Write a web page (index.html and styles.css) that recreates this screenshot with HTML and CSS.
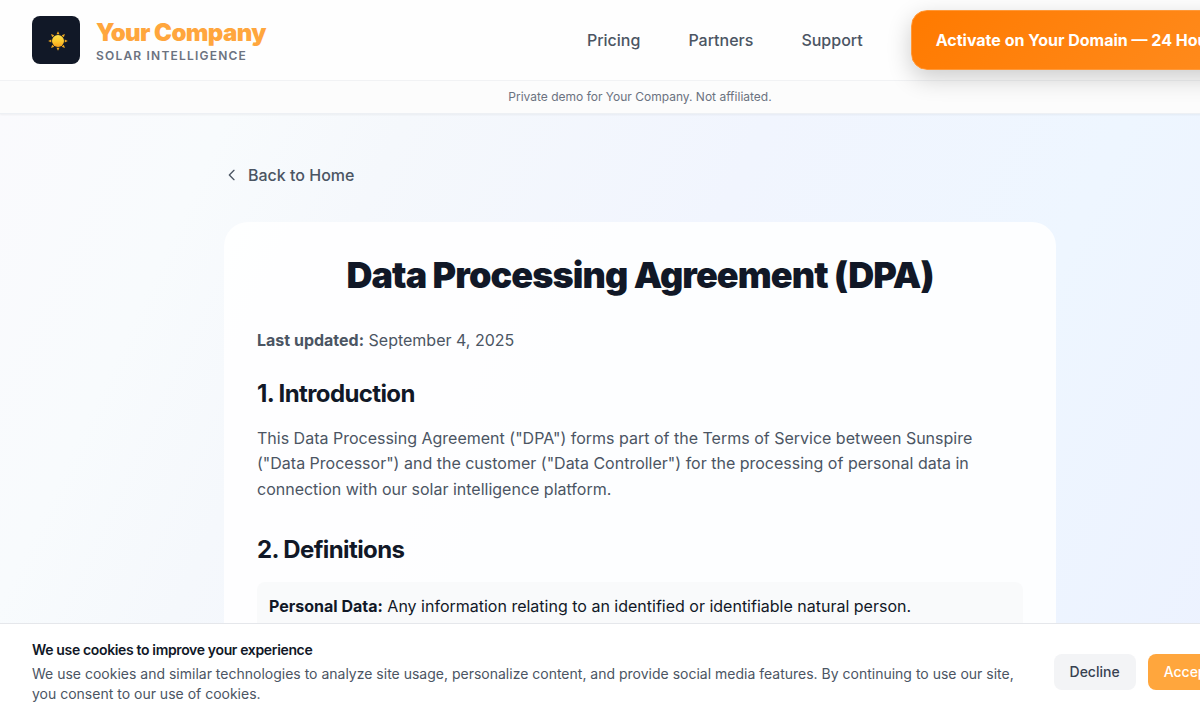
FILE: index.html
```html
<!DOCTYPE html>
<html lang="en">
<head>
<meta charset="utf-8">
<meta name="viewport" content="width=device-width, initial-scale=1">
<title>Data Processing Agreement (DPA)</title>
<link rel="stylesheet" href="styles.css">
</head>
<body>
<div class="page">
  <header class="site-header">
    <div class="header-bar">
      <a class="brand" href="#">
        <span class="brand-mark">
          <svg class="sun" viewBox="0 0 20 20" aria-hidden="true">
            <defs>
              <linearGradient id="sun-fill" x1="0" y1="0" x2="0" y2="1">
                <stop offset="0" stop-color="#ffe04a"/>
                <stop offset="0.5" stop-color="#ffcb2e"/>
                <stop offset="1" stop-color="#f9a01b"/>
              </linearGradient>
            </defs>
            <g fill="#f0a81f">
              <path id="ray" d="M10 .2 11.5 3.3h-3z"/>
              <use href="#ray" transform="rotate(45 10 10)"/>
              <use href="#ray" transform="rotate(90 10 10)"/>
              <use href="#ray" transform="rotate(135 10 10)"/>
              <use href="#ray" transform="rotate(180 10 10)"/>
              <use href="#ray" transform="rotate(225 10 10)"/>
              <use href="#ray" transform="rotate(270 10 10)"/>
              <use href="#ray" transform="rotate(315 10 10)"/>
            </g>
            <circle cx="10" cy="10" r="6" fill="url(#sun-fill)"/>
          </svg>
        </span>
        <span class="brand-text">
          <span class="brand-name">Your Company</span>
          <span class="brand-tag">Solar Intelligence</span>
        </span>
      </a>
      <nav class="nav">
        <a class="nav-link" href="#">Pricing</a>
        <a class="nav-link" href="#">Partners</a>
        <a class="nav-link" href="#">Support</a>
        <button class="cta" type="button">Activate on Your Domain — 24 Hours</button>
      </nav>
    </div>
    <p class="notice">Private demo for Your Company. Not affiliated.</p>
  </header>
  <main class="main">
    <a class="back" href="#">
      <svg class="chevron" viewBox="0 0 24 24" fill="none" stroke="currentColor" stroke-width="2" stroke-linecap="round" stroke-linejoin="round" aria-hidden="true"><path d="M15 19l-7-7 7-7"/></svg>
      Back to Home
    </a>
    <article class="card">
      <h1 class="title">Data Processing Agreement (DPA)</h1>
      <p class="text"><strong>Last updated:</strong> September 4, 2025</p>
      <h2 class="heading heading-first">1. Introduction</h2>
      <p class="text">This Data Processing Agreement ("DPA") forms part of the Terms of Service between Sunspire ("Data Processor") and the customer ("Data Controller") for the processing of personal data in connection with our solar intelligence platform.</p>
      <h2 class="heading">2. Definitions</h2>
      <p class="definition"><strong>Personal Data:</strong> Any information relating to an identified or identifiable natural person.</p>
    </article>
  </main>
  <section class="cookies" aria-label="Cookie consent">
    <div class="cookies-copy">
      <h3 class="cookies-title">We use cookies to improve your experience</h3>
      <p class="cookies-text">We use cookies and similar technologies to analyze site usage, personalize content, and provide social media features. By continuing to use our site, you consent to our use of cookies.</p>
    </div>
    <div class="cookies-actions">
      <button class="btn btn-muted" type="button">Decline</button>
      <button class="btn btn-primary" type="button">Accept All</button>
    </div>
  </section>
</div>
</body>
</html>
```

FILE: styles.css
```css
* {
  box-sizing: border-box;
}

html {
  overflow-x: hidden;
}

body,
h1,
h2,
h3,
p {
  margin: 0;
}

body {
  color: #111827;
  font-family: Inter, "Liberation Sans", sans-serif;
  font-size: 16px;
  line-height: 26px;
}

a {
  color: inherit;
  text-decoration: none;
}

button {
  font: inherit;
  border: 0;
  cursor: pointer;
}

.page {
  min-width: 1280px;
  min-height: 100vh;
  background: linear-gradient(115deg, #fafafd 3%, #f8fbfd 17%, #f5f8fc 28%, #f1f5fe 50%, #eef6ff 72%, #ecf1ff 98%);
}

.site-header {
  position: relative;
  background: #fefefe;
  border-bottom: 1px solid #edf0f4;
  box-shadow: 0 1px 2px rgba(0, 0, 0, 0.05);
}

.header-bar {
  display: flex;
  align-items: center;
  justify-content: space-between;
  height: 80px;
  padding: 0 32px;
}

.brand {
  display: flex;
  align-items: center;
  gap: 16px;
}

.brand-mark {
  display: grid;
  place-items: center;
  width: 48px;
  height: 48px;
  padding: 2px 0 0 4px;
  background: #111827;
  border-radius: 8px;
}

.sun {
  width: 20px;
  height: 20px;
}

.brand-text {
  display: flex;
  flex-direction: column;
}

.brand-name {
  color: #ffa63d;
  font-size: 24px;
  font-weight: 900;
  letter-spacing: -0.025em;
  line-height: 31px;
}

.brand-tag {
  color: #6b7280;
  font-size: 12px;
  font-weight: 600;
  letter-spacing: 0.1em;
  line-height: 16px;
  text-transform: uppercase;
}

.nav {
  display: flex;
  align-items: center;
  gap: 48px;
}

.nav-link,
.back {
  color: #4b5563;
  font-weight: 500;
}

.cta {
  height: 60px;
  padding: 0 24px;
  color: #fff;
  font-weight: 700;
  white-space: nowrap;
  background: linear-gradient(135deg, #ff7a00, #ff8c1f);
  border: 1px solid #ff9838;
  border-radius: 16px;
  box-shadow: 0 8px 24px rgba(0, 0, 0, 0.2);
}

.notice {
  padding: 8px 32px;
  color: #6b7280;
  font-size: 12px;
  line-height: 16px;
  text-align: center;
  border-top: 1px solid #f1f2f4;
  background: rgba(249, 250, 251, 0.4);
}

.main {
  max-width: 896px;
  margin: 0 auto;
  padding: 48px 32px 112px;
}

.back {
  display: flex;
  align-items: center;
  gap: 8px;
  width: fit-content;
  margin-bottom: 34px;
}

.chevron {
  width: 16px;
  height: 16px;
}

.card {
  padding: 33px;
  background: rgba(255, 255, 255, 0.86);
  border-radius: 24px;
}

.title {
  margin-bottom: 33px;
  font-size: 36px;
  font-weight: 900;
  letter-spacing: -0.025em;
  line-height: 40px;
  text-align: center;
}

.text,
.definition {
  line-height: 1.6;
}

.text {
  color: #4b5563;
}

.heading {
  margin: 32px 0 16px;
  font-size: 24px;
  font-weight: 700;
  letter-spacing: -0.025em;
  line-height: 32px;
}

.heading-first {
  margin-top: 24px;
}

.definition {
  padding: 12px;
  background: #f9fafb;
  border-radius: 8px;
}

.cookies {
  position: fixed;
  right: 0;
  bottom: 0;
  left: 0;
  display: flex;
  align-items: center;
  justify-content: space-between;
  gap: 32px;
  min-width: 1280px;
  padding: 16px 32px;
  background: #fff;
  border-top: 1px solid #e5e7eb;
}

.cookies-title {
  margin-bottom: 4px;
  font-size: 14px;
  font-weight: 600;
  letter-spacing: -0.025em;
  line-height: 20px;
}

.cookies-text {
  color: #4b5563;
  font-size: 14px;
  line-height: 20px;
}

.cookies-actions {
  display: flex;
  flex-shrink: 0;
  gap: 12px;
}

.btn {
  padding: 8px 16px;
  font-size: 14px;
  font-weight: 500;
  line-height: 20px;
  border-radius: 8px;
}

.btn-muted {
  color: #374151;
  background: #f3f4f6;
}

.btn-primary {
  color: #fff;
  background: #ffa63d;
}
```
